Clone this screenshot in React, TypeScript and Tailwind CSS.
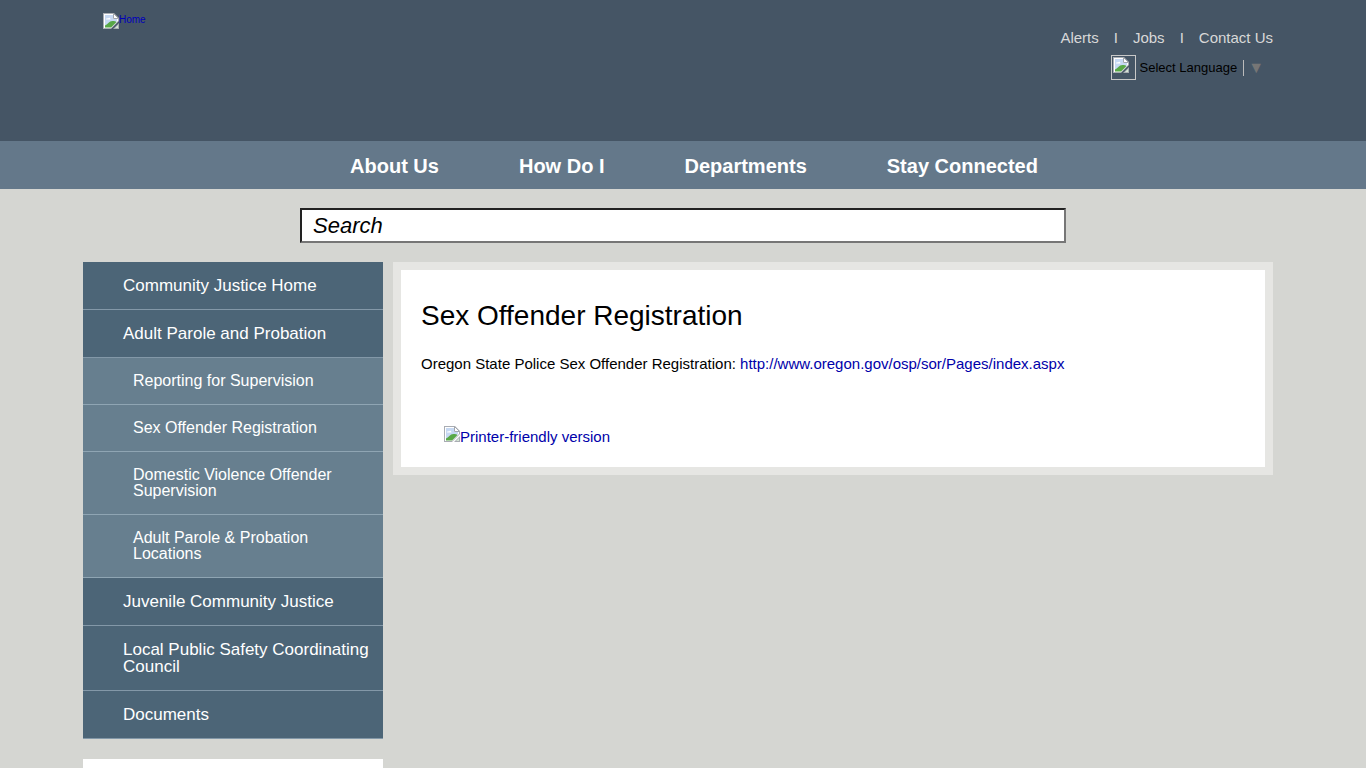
import React from "react";

type NavItem = { label: string; child?: boolean };

const topLinks = ["Alerts", "Jobs", "Contact Us"];
const mainLinks = ["About Us", "How Do I", "Departments", "Stay Connected"];
const sideLinks: NavItem[] = [
  { label: "Community Justice Home" },
  { label: "Adult Parole and Probation" },
  { label: "Reporting for Supervision", child: true },
  { label: "Sex Offender Registration", child: true },
  { label: "Domestic Violence Offender Supervision", child: true },
  { label: "Adult Parole & Probation Locations", child: true },
  { label: "Juvenile Community Justice" },
  { label: "Local Public Safety Coordinating Council" },
  { label: "Documents" },
];

function ImageIcon() {
  return (
    <svg viewBox="0 0 16 16" className="h-4 w-4 shrink-0" aria-hidden="true">
      <path d="M0 0H11L16 5V8L8 16H0Z" fill="#a9adb3" />
      <path d="M1 1H10.5L15 5.5V8L8 15H1Z" fill="#fff" />
      <path d="M2 2H10V6H14V8L8 14H2Z" fill="#c6d8f2" />
      <path d="M3 6.5C3 5.3 4.5 5 5 5.6C5.5 4.2 7.5 4.6 7.5 6.5Z" fill="#fff" />
      <path d="M2 14.5V12.5C4.5 11.5 6 8 9.5 8C11.5 8 12.5 8.3 13.5 9L8 14.5Z" fill="#58a846" />
      <path d="M10.5 0.5V5.5H15.5Z" fill="#fff" stroke="#a2a6ac" />
      <path d="M10 16L16 10V16Z" fill="#a9adb3" />
      <path d="M12 15L15 12V15Z" fill="#d5e6d5" />
    </svg>
  );
}

export default function App() {
  return (
    <div className="min-h-screen bg-[#d5d6d2] font-['Liberation_Sans',Arial,sans-serif] text-black">
      <header className="bg-[#455565]">
        <div className="mx-auto flex h-[141px] max-w-[1200px] justify-between pr-[10px] pl-5">
          <a href="#home" className="mt-[13px] flex h-4 items-start text-[10px] leading-[14px] text-[#0000bb]">
            <ImageIcon />
            Home
          </a>
          <div className="flex flex-col items-end pt-7">
            <ul className="flex text-[15px] leading-5 text-[#d8d8d8]">
              {topLinks.map((label, i) => (
                <li key={label} className="flex">
                  {i > 0 && <span className="px-[15px]">I</span>}
                  <a href="#top">{label}</a>
                </li>
              ))}
            </ul>
            <button type="button" className="mt-[7px] mr-[9px] flex items-center text-[13px]">
              <span className="mr-1 h-[25px] w-[25px] border border-[#c8c8c8] p-px">
                <ImageIcon />
              </span>
              Select Language
              <span className="ml-[6px] h-4 border-l border-[#bbbbbb]" />
              <span className="ml-1 text-base leading-4 text-[#767676]">▼</span>
            </button>
          </div>
        </div>
      </header>

      <nav className="bg-[#64788a]">
        <ul className="flex h-12 items-center justify-center gap-20 pt-0.5 pl-[22px] text-xl font-bold text-white">
          {mainLinks.map((label) => (
            <li key={label}>
              <a href="#nav">{label}</a>
            </li>
          ))}
        </ul>
      </nav>

      <form className="mx-auto mt-[19px] max-w-[766px]">
        <input
          type="text"
          aria-label="Search"
          placeholder="Search"
          className="block h-[35px] w-full border-2 border-t-[#222222] border-r-[#767676] border-b-[#767676] border-l-[#222222] bg-white px-[11px] text-[22px] italic outline-none placeholder:text-black"
        />
      </form>

      <div className="mx-auto mt-[19px] flex max-w-[1200px] items-start gap-[10px] pr-[10px]">
        <aside className="w-[300px] shrink-0">
          <ul className="text-white">
            {sideLinks.map(({ label, child }) => (
              <li key={label}>
                <a
                  href="#section"
                  className={
                    child
                      ? "block border-b border-[#8fa5b3] bg-[#677f8f] py-[15px] pr-[10px] pl-[50px] text-base leading-4"
                      : "block border-b border-[#8398a8] bg-[#4c6577] py-[15px] pr-[10px] pl-10 text-[17px] leading-[17px]"
                  }
                >
                  {label}
                </a>
              </li>
            ))}
          </ul>
          <div className="mt-5 h-10 bg-white" />
        </aside>

        <main className="min-w-0 flex-1 border-8 border-[#e6e6e3] bg-white px-5 pt-7 pb-5">
          <h1 className="text-[28px] leading-9">Sex Offender Registration</h1>
          <p className="mt-5 text-[15px] leading-5">
            Oregon State Police Sex Offender Registration:{" "}
            <a href="http://www.oregon.gov/osp/sor/Pages/index.aspx" className="text-[#0000aa]">
              http://www.oregon.gov/osp/sor/Pages/index.aspx
            </a>
          </p>
          <a href="#print" className="mt-[52px] ml-[23px] flex w-fit items-start text-[15px] leading-[21px] text-[#0000aa]">
            <ImageIcon />
            Printer-friendly version
          </a>
        </main>
      </div>
    </div>
  );
}
